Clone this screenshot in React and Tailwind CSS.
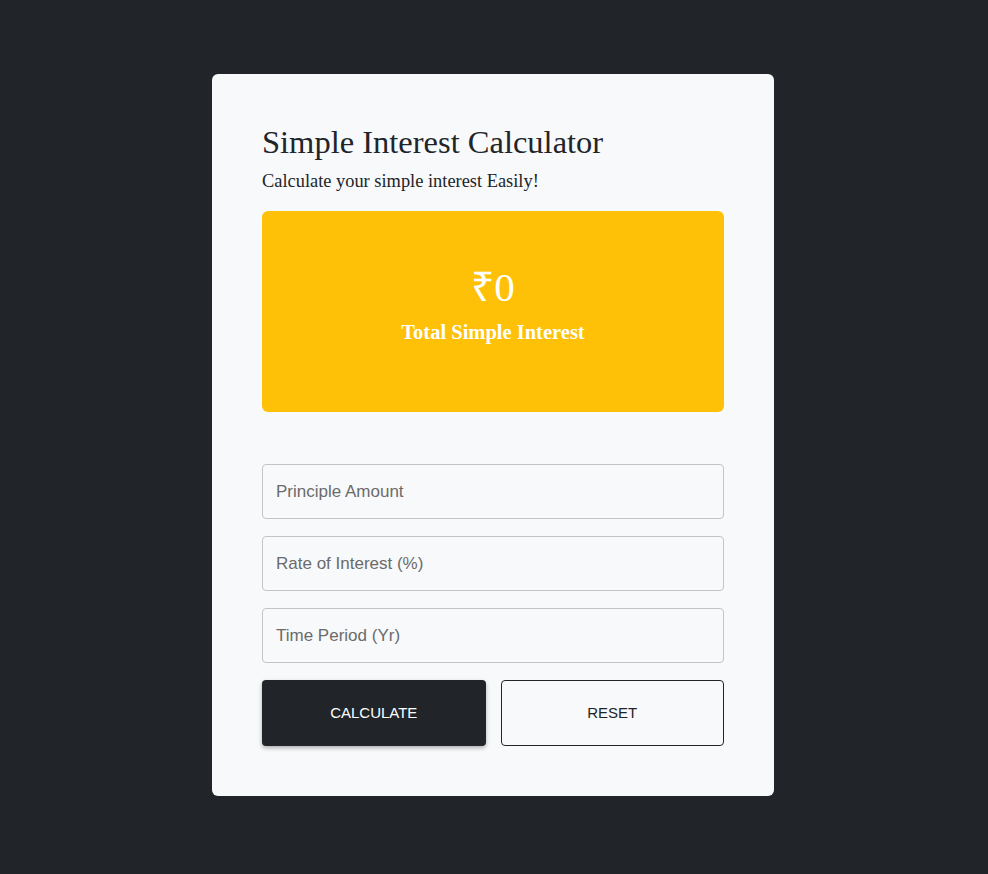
import { useState } from 'react';

const serif = { fontFamily: '"Liberation Serif", Georgia, serif' };

function Field({ placeholder, value, onChange }) {
  return (
    <input
      type="number"
      value={value}
      onChange={(event) => onChange(event.target.value)}
      placeholder={placeholder}
      className="h-[55px] w-full rounded border border-[#c4c4c4] bg-transparent px-[13px] text-[17px] text-[#212529] outline-none placeholder:text-[#6b6b6b] [font-family:'Liberation_Sans',Arial,sans-serif]"
    />
  );
}

export default function App() {
  const [principle, setPrinciple] = useState('');
  const [rate, setRate] = useState('');
  const [time, setTime] = useState('');
  const [interest, setInterest] = useState(0);

  function calculate() {
    setInterest((Number(principle) * Number(rate) * Number(time)) / 100);
  }

  function reset() {
    setPrinciple('');
    setRate('');
    setTime('');
    setInterest(0);
  }

  return (
    <div className="flex min-h-screen items-start justify-center bg-[#212529] pr-[2px] pt-[74px]">
      <div className="w-[562px] rounded-md bg-[#f8f9fa] px-[50px] pb-[50px] pt-[48px]">
        <h1 className="text-[32.5px] leading-[40px] text-[#212529]" style={serif}>Simple Interest Calculator</h1>
        <p className="mt-[7px] text-[18.4px] leading-[24px] text-[#212529]" style={serif}>Calculate your simple interest Easily!</p>

        <div className="mt-[18px] flex h-[201px] flex-col items-center justify-center rounded-md bg-[#ffc107] pb-[14px] text-white" style={serif}>
          <div className="text-[41px] leading-[46px]">₹{interest}</div>
          <div className="mt-[9px] text-[20.5px] font-bold leading-[26px]">Total Simple Interest</div>
        </div>

        <div className="mt-[52px] flex flex-col gap-[17px]">
          <Field placeholder="Principle Amount" value={principle} onChange={setPrinciple} />
          <Field placeholder="Rate of Interest (%)" value={rate} onChange={setRate} />
          <Field placeholder="Time Period (Yr)" value={time} onChange={setTime} />
        </div>

        <div className="mt-[17px] grid grid-cols-2 gap-[15px] [font-family:'Liberation_Sans',Arial,sans-serif]">
          <button
            onClick={calculate}
            className="h-[66px] rounded bg-[#212529] text-[15px] uppercase text-white shadow-[0_2px_4px_rgba(0,0,0,0.3)]"
          >
            Calculate
          </button>
          <button
            onClick={reset}
            className="h-[66px] rounded border border-[#212529] text-[15px] uppercase text-[#212529]"
          >
            Reset
          </button>
        </div>
      </div>
    </div>
  );
}
